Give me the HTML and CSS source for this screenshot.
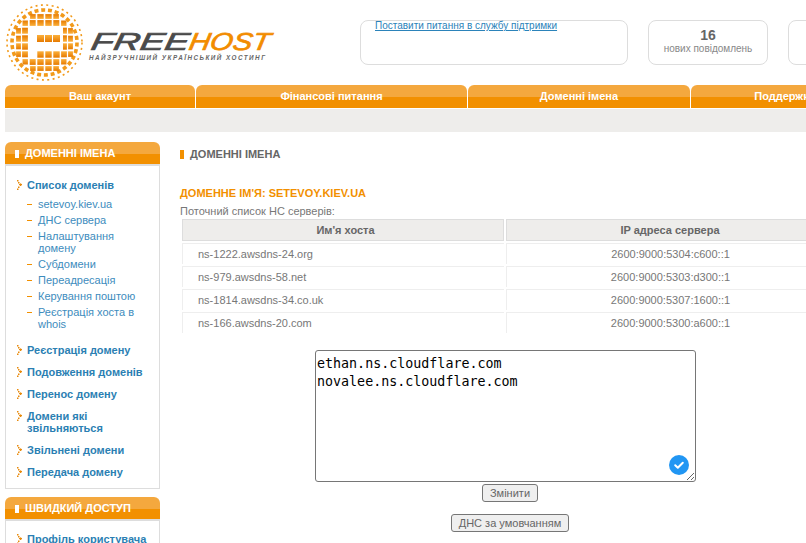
FILE: index.html
```html
<!DOCTYPE html>
<html lang="uk">
<head>
  <meta charset="UTF-8">
  <title>FREEhost - Доменні імена</title>
  <link rel="stylesheet" href="styles.css">
</head>
<body>
<div class="page">

  <!-- шапка -->
  <div class="header">
    <svg class="logo" width="280" height="85" viewBox="0 0 280 85">
      <defs>
        <linearGradient id="dot" x1="0" y1="0" x2="0" y2="1">
          <stop offset="0" stop-color="#fbb03b"/>
          <stop offset="1" stop-color="#e67a00"/>
        </linearGradient>
        <g id="quarter" fill="url(#dot)">
          <rect x="0.8" y="0.8" width="6.4" height="6.4"/><rect x="8.8" y="0.8" width="6.4" height="6.4"/><rect x="16.6" y="0.8" width="5.8" height="6.4"/><rect x="23.6" y="0.8" width="4.8" height="6"/>
          <rect x="0.8" y="8.8" width="6.4" height="6.4"/><rect x="8.8" y="8.8" width="6.4" height="6.4"/><rect x="16.6" y="8.8" width="5.8" height="6"/><rect x="23.6" y="8.8" width="4.8" height="5.6"/>
          <rect x="0.8" y="16.6" width="6.4" height="5.8"/><rect x="8.8" y="16.6" width="6" height="5.8"/><rect x="16.6" y="16.6" width="5.4" height="5.4"/>
          <rect x="0.8" y="23.6" width="6.4" height="4.8"/><rect x="8.8" y="23.6" width="5.6" height="4.8"/>
        </g>
      </defs>
      <g transform="translate(44.5 42.5)">
        <circle class="ring-outer" r="37.5"/>
        <circle class="ring-mid" r="32.5"/>
        <use href="#quarter"/>
        <use href="#quarter" transform="scale(-1 1)"/>
        <use href="#quarter" transform="scale(1 -1)"/>
        <use href="#quarter" transform="scale(-1 -1)"/>
      </g>
      <path class="logo-cut" d="M28 27H63V51H37V58H28Z"/>
      <g fill="url(#dot)">
        <rect x="37" y="35" width="7" height="7"/><rect x="45" y="35" width="7" height="7"/><rect x="53" y="35" width="7" height="7"/>
      </g>
      <text class="logo-free" transform="translate(90 49.5) skewX(-10)" textLength="98" lengthAdjust="spacingAndGlyphs">FREE</text>
      <text class="logo-host" transform="translate(188 49.5) skewX(-10)" textLength="81" lengthAdjust="spacingAndGlyphs">HOST</text>
      <text class="logo-tag" x="89" y="60" textLength="176">НАЙЗРУЧНІШИЙ УКРАЇНСЬКИЙ ХОСТИНГ</text>
    </svg>
    <div class="info-box ask-box"><a href="#">Поставити питання в службу підтримки</a></div>
    <div class="info-box count-box"><b>16</b><span>нових повідомлень</span></div>
    <div class="info-box count-box"></div>
  </div>

  <!-- верхнє меню -->
  <div class="tabs">
    <a class="tab tab1" href="#">Ваш акаунт</a>
    <a class="tab tab2" href="#">Фінансові питання</a>
    <a class="tab tab3" href="#">Доменні імена</a>
    <a class="tab tab4" href="#">Поддержка</a>
  </div>
  <div class="subbar"></div>

  <div class="content">

    <!-- ліва колонка -->
    <div class="sidebar">
      <div class="side-title"><i></i>Доменні імена</div>
      <div class="side-box">
        <ul class="side-menu">
          <li><a href="#">Список доменів</a>
            <ul class="side-sub">
              <li><a href="#">setevoy.kiev.ua</a></li>
              <li><a href="#">ДНС сервера</a></li>
              <li><a href="#">Налаштування домену</a></li>
              <li><a href="#">Субдомени</a></li>
              <li><a href="#">Переадресація</a></li>
              <li><a href="#">Керування поштою</a></li>
              <li><a href="#">Реєстрація хоста в whois</a></li>
            </ul>
          </li>
          <li><a href="#">Реєстрація домену</a></li>
          <li><a href="#">Подовження доменів</a></li>
          <li><a href="#">Перенос домену</a></li>
          <li><a href="#">Домени які звільняються</a></li>
          <li><a href="#">Звільнені домени</a></li>
          <li><a href="#">Передача домену</a></li>
        </ul>
      </div>
      <div class="side-title"><i></i>Швидкий доступ</div>
      <div class="side-box side-box-quick">
        <ul class="side-menu">
          <li><a href="#">Профіль користувача</a></li>
        </ul>
      </div>
    </div>

    <!-- основна частина -->
    <div class="main">
      <h1 class="page-title"><i></i>Доменні імена</h1>
      <h2 class="domain-title">Доменне ім'я: setevoy.kiev.ua</h2>
      <p class="list-note">Поточний список НС серверів:</p>
      <table class="ns-table">
        <tr><th class="col-host">Им'я хоста</th><th>IP адреса сервера</th></tr>
        <tr><td class="host">ns-1222.awsdns-24.org</td><td>2600:9000:5304:c600::1</td></tr>
        <tr><td class="host">ns-979.awsdns-58.net</td><td>2600:9000:5303:d300::1</td></tr>
        <tr><td class="host">ns-1814.awsdns-34.co.uk</td><td>2600:9000:5307:1600::1</td></tr>
        <tr><td class="host">ns-166.awsdns-20.com</td><td>2600:9000:5300:a600::1</td></tr>
      </table>

      <form class="ns-form">
        <div class="area-wrap">
          <textarea class="ns-area" spellcheck="false">ethan.ns.cloudflare.com
novalee.ns.cloudflare.com</textarea>
          <span class="area-check">
            <svg width="20" height="20" viewBox="0 0 20 20"><path d="M6.2 10.2l2.6 2.5 5-5" fill="none" stroke="#fff" stroke-width="2" stroke-linecap="round" stroke-linejoin="round"/></svg>
          </span>
        </div>
        <button class="btn" type="button">Змінити</button>
        <button class="btn btn-default" type="button">ДНС за умовчанням</button>
      </form>
    </div>
  </div>
</div>
</body>
</html>
```

FILE: styles.css
```css
html, body {
  margin: 0;
  padding: 0;
  height: 543px;
  overflow: hidden;
  background: #fff;
}
body {
  font-family: "Liberation Sans", Arial, sans-serif;
  font-size: 11px;
  color: #777;
}
.page {
  width: 1000px;
  height: 543px;
  overflow: hidden;
}

/* шапка */
.header {
  display: flex;
  height: 85px;
  box-sizing: border-box;
  padding-top: 20px;
}
.logo {
  flex: none;
  margin-top: -20px;
  margin-right: 80px;
}
.logo-cut { fill: #fff; }
.ring-outer, .ring-mid {
  fill: none;
  stroke: #f29a1a;
}
.ring-outer {
  stroke-width: 1.6px;
  stroke-dasharray: 2 3.4;
}
.ring-mid {
  stroke-width: 3.6px;
  stroke-dasharray: 4 2.8;
}
.logo-free, .logo-host {
  font-size: 24.5px;
  font-style: italic;
  stroke-width: 0.7px;
}
.logo-free { fill: #4a4a4a; stroke: #4a4a4a; }
.logo-host { fill: #f28c00; stroke: #f28c00; }
.logo-tag {
  font-size: 6.3px;
  font-weight: bold;
  font-style: italic;
  fill: #666;
}
.info-box {
  flex: none;
  height: 45px;
  box-sizing: border-box;
  border: 1px solid #ddd;
  border-radius: 8px;
  margin-right: 20px;
}
.ask-box {
  width: 268px;
  padding-left: 14px;
  font-size: 10px;
  line-height: 10px;
}
.ask-box a { color: #2b83ba; }
.count-box {
  width: 120px;
  text-align: center;
  padding-top: 6px;
  font-size: 10px;
  color: #888;
}
.count-box b {
  display: block;
  font-size: 14px;
  line-height: 16px;
  color: #666;
}
.count-box span {
  display: block;
  line-height: 11px;
}

/* верхнє меню */
.tabs {
  display: flex;
  gap: 1px;
  margin-left: 5px;
  height: 23px;
}
.tab {
  display: block;
  height: 23px;
  line-height: 23px;
  text-align: center;
  font-weight: bold;
  color: #fff;
  text-decoration: none;
  border-radius: 6px 6px 0 0;
  background: linear-gradient(#f4a83e 12px, #f29000 12px);
}
.tab1 { width: 190px; }
.tab2 { width: 271px; }
.tab3 { width: 222px; }
.tab4 { width: 187px; }
.subbar {
  height: 23px;
  margin: 1px 0 0 5px;
  background: #eeedeb;
}

.content {
  display: flex;
  padding: 10px 0 0 5px;
}

/* ліва колонка */
.sidebar {
  flex: none;
  width: 155px;
  margin-right: 20px;
}
.side-title {
  height: 22px;
  line-height: 22px;
  padding-left: 10px;
  font-weight: bold;
  color: #fff;
  text-transform: uppercase;
  border-radius: 6px 6px 0 0;
  background: linear-gradient(#f4a83e 12px, #f29000 12px);
}
.side-title i {
  display: inline-block;
  width: 4px;
  height: 8px;
  margin-right: 6px;
  background: #fff;
  vertical-align: -1px;
}
.side-box {
  border: 1px solid #ddd;
  border-top-width: 2px;
  margin-bottom: 8px;
  padding: 13px 10px 0 21px;
}
.side-box-quick { padding-top: 12px; }
.side-menu, .side-sub {
  list-style: none;
  margin: 0;
  padding: 0;
}
.side-menu > li {
  line-height: 12px;
  margin-bottom: 10px;
  margin-left: -11px;
  padding-left: 11px;
  background: url("data:image/svg+xml,%3Csvg xmlns='http://www.w3.org/2000/svg' width='6' height='10'%3E%3Cg fill='%23e88a0c'%3E%3Crect x='1' y='0' width='1.5' height='1.5'/%3E%3Crect x='2' y='2' width='1.5' height='1.5'/%3E%3Crect x='3' y='4' width='3' height='1.2'/%3E%3Crect x='4' y='3.4' width='1.2' height='2.6'/%3E%3Crect x='2' y='6.5' width='1.5' height='1.5'/%3E%3Crect x='1' y='8.5' width='1.5' height='1.5'/%3E%3C/g%3E%3C/svg%3E") no-repeat 0 1px;
}
.side-menu > li > a {
  font-weight: bold;
  color: #2b7fb3;
  text-decoration: none;
}
.side-sub {
  margin-top: 7px;
  padding-bottom: 4px;
}
.side-sub li {
  position: relative;
  padding-left: 11px;
  margin-bottom: 4px;
  line-height: 12px;
}
.side-sub li:last-child { margin-bottom: 0; }
.side-sub li::before {
  content: "";
  position: absolute;
  left: 0;
  top: 6px;
  width: 5px;
  height: 1px;
  background: #f29000;
}
.side-sub a {
  color: #3d8cbd;
  text-decoration: none;
}

/* основна частина */
.main {
  flex: none;
  width: 660px;
}
.page-title {
  margin: 2px 0 0;
  font-size: 11px;
  line-height: 20px;
  font-weight: bold;
  color: #666;
  text-transform: uppercase;
}
.page-title i {
  display: inline-block;
  width: 4px;
  height: 9px;
  margin-right: 6px;
  background: #f29000;
  vertical-align: -1px;
}
.domain-title {
  margin: 19px 0 0;
  font-size: 11px;
  line-height: 20px;
  font-weight: bold;
  color: #f29000;
  text-transform: uppercase;
}
.list-note {
  margin: 0;
  line-height: 16px;
  color: #777;
}
.ns-table {
  width: 656px;
  table-layout: fixed;
  margin: -2px 0 0;
  border-collapse: separate;
  border-spacing: 2px;
  font-size: 11px;
}
.ns-table th {
  height: 22px;
  padding: 0;
  box-sizing: border-box;
  background: #eeedeb;
  border: 1px solid #ddd;
  color: #666;
  font-weight: bold;
}
.ns-table .col-host {
  width: 322px;
  padding-left: 5px;
}
.ns-table td {
  height: 21px;
  padding: 0;
  box-sizing: border-box;
  border-top: 1px solid #eee;
  border-left: 1px solid #eee;
  text-align: center;
}
.ns-table .host {
  text-align: left;
  padding-left: 15px;
}

.ns-form {
  margin-top: 15px;
  text-align: center;
}
.area-wrap {
  position: relative;
  width: 381px;
  margin: 0 auto;
  left: -4.5px;
  height: 132px;
}
.ns-area {
  display: block;
  width: 381px;
  height: 132px;
  box-sizing: border-box;
  margin: 0;
  padding: 4px 1px 2px;
  border: 1px solid #767676;
  border-radius: 3px;
  font-family: monospace;
  font-size: 13.33px;
  line-height: 18px;
  color: #000;
}
.area-check {
  position: absolute;
  right: 7px;
  bottom: 7px;
  width: 20px;
  height: 20px;
  border-radius: 50%;
  background: #2196f3;
}
.area-check svg { display: block; }
.btn {
  display: block;
  margin: 2px auto 0;
  height: 18px;
  padding: 0 7px;
  box-sizing: border-box;
  background: #efefef;
  border: 1px solid #767676;
  border-radius: 3px;
  font-family: "Liberation Sans", Arial, sans-serif;
  font-size: 11px;
  color: #666;
}
.btn-default { margin-top: 12px; }
```
